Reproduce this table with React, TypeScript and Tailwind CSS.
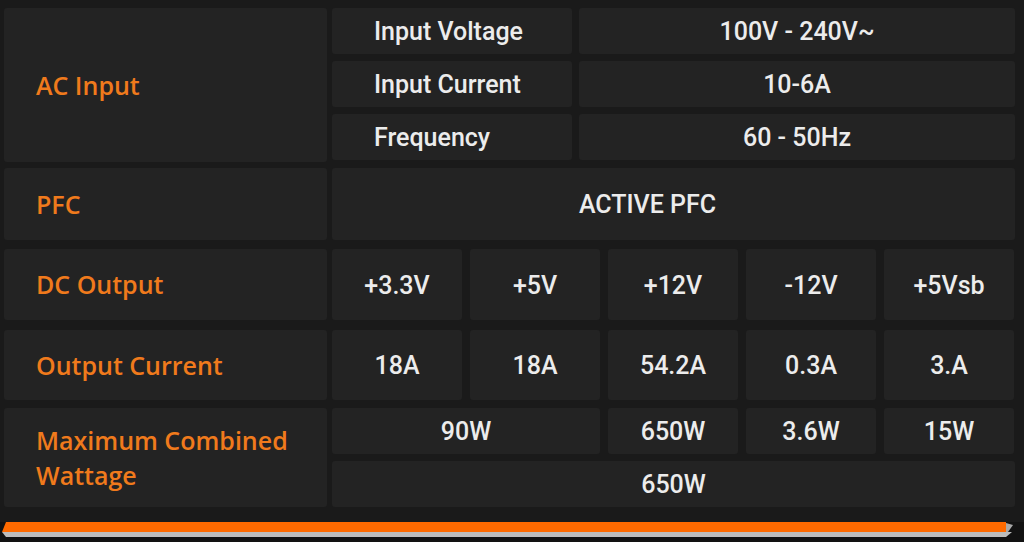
const cell = "bg-[#232323] rounded-[3px] flex items-center";
const val = "text-[#ececec] text-[25px] font-medium pt-[2px]";
const label = "text-[#f07a1c] text-[25px] font-semibold leading-[35px]";

function Label({ children, h }: { children: React.ReactNode; h: string }) {
  return (
    <div className={`${cell} w-[323px] ${h} pl-[32px]`} style={{ fontFamily: "'Open Sans', sans-serif" }}>
      <div className={label}>{children}</div>
    </div>
  );
}

function Val({ children, w, left, extra = "" }: { children: React.ReactNode; w: string; left?: boolean; extra?: string }) {
  return (
    <div className={`${cell} ${w} h-full ${left ? "pl-[42px]" : "justify-center"} ${extra}`}>
      <span className={val}>{children}</span>
    </div>
  );
}

export default function App() {
  const dc = ["+3.3V", "+5V", "+12V", "-12V", "+5Vsb"];
  const oc = ["18A", "18A", "54.2A", "0.3A", "3.A"];
  return (
    <div
      className="w-[1024px] h-[542px] bg-[#1a1a1a] overflow-hidden pt-[8px] pl-[4px]"
      style={{ fontFamily: "Roboto, sans-serif" }}
    >
      {/* AC input */}
      <div className="flex gap-[5px] h-[154px]">
        <Label h="h-[154px]">AC Input</Label>
        <div className="flex flex-col gap-[7px] w-[683px]">
          {[
            ["Input Voltage", "100V - 240V~"],
            ["Input Current", "10-6A"],
            ["Frequency", "60 - 50Hz"],
          ].map(([k, v]) => (
            <div key={k} className="flex gap-[7px] h-[46px]">
              <Val w="w-[240px]" left>
                {k}
              </Val>
              <Val w="w-[436px]">{v}</Val>
            </div>
          ))}
        </div>
      </div>

      {/* PFC */}
      <div className="flex gap-[5px] h-[72px] mt-[6px]">
        <Label h="h-[72px]">PFC</Label>
        <Val w="w-[683px]" extra="pr-[52px]">
          ACTIVE PFC
        </Val>
      </div>

      {/* DC output */}
      <div className="flex gap-[5px] h-[71px] mt-[9px]">
        <Label h="h-[71px]">DC Output</Label>
        <div className="flex gap-[8px] w-[683px]">
          {dc.map((d, i) => (
            <Val key={i} w="w-[130px]">
              {d}
            </Val>
          ))}
        </div>
      </div>

      {/* Output current */}
      <div className="flex gap-[5px] h-[70px] mt-[10px]">
        <Label h="h-[70px]">Output Current</Label>
        <div className="flex gap-[8px] w-[683px]">
          {oc.map((d, i) => (
            <Val key={i} w="w-[130px]">
              {d}
            </Val>
          ))}
        </div>
      </div>

      {/* Max wattage */}
      <div className="flex gap-[5px] h-[99px] mt-[8px]">
        <Label h="h-[99px]">
          Maximum Combined
          <br />
          Wattage
        </Label>
        <div className="flex flex-col gap-[7px] w-[683px]">
          <div className="flex gap-[8px] h-[46px]">
            <Val w="w-[268px]">90W</Val>
            <Val w="w-[130px]">650W</Val>
            <Val w="w-[130px]">3.6W</Val>
            <Val w="w-[130px]">15W</Val>
          </div>
          <div className="flex h-[46px]">
            <Val w="w-[683px]">650W</Val>
          </div>
        </div>
      </div>

      {/* bottom bar */}
      <div className="mt-[15px] -ml-[4px] h-[20px] bg-[#121212]">
        <svg width="1024" height="15" viewBox="0 0 1024 15" className="block">
          <polygon points="6,0 1006,0 1006,10 2,10" fill="#ff6a00" />
          <polygon points="2,10 1006,10 1012,10 1006,15 6,15" fill="#bdbdbd" />
          <polygon points="1006,1 1013,3 1008,10 1006,10" fill="#a8a8a8" />
        </svg>
      </div>
    </div>
  );
}
